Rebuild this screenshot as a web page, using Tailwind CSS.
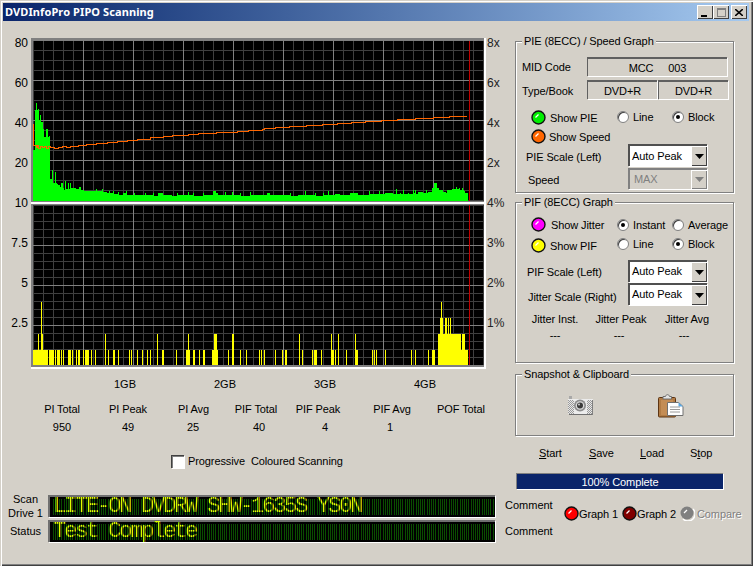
<!DOCTYPE html>
<html>
<head>
<meta charset="utf-8">
<script src="https://cdn.jsdelivr.net/npm/@tailwindcss/browser@4"></script>
<title>DVDInfoPro PIPO Scanning</title>
</head>
<body class="bg-[#d4d0c8]">
<svg width="0" height="0" class="absolute">
  <defs>
    <symbol id="led" viewBox="0 0 15 15"><circle cx="7.5" cy="7.5" r="6.5" fill="currentColor" stroke="#111" stroke-width="1.4"/><path d="M4.5 7.5 L7.5 4.5" stroke="#fff" stroke-width="1.3" fill="none"/></symbol>
    <symbol id="ledoff" viewBox="0 0 15 15"><path d="M3 13A7 7 0 0 0 13 3" stroke="#fff" stroke-width="1.4" fill="none"/><circle cx="7" cy="7" r="6.5" fill="#808080"/><path d="M4 7 L7 4" stroke="#fff" stroke-width="1.3" fill="none"/></symbol>
    <symbol id="arrow" viewBox="0 0 9 5"><path d="M0 0H9L4.5 5Z" fill="currentColor"/></symbol>
  </defs>
</svg>
<div class="w-[753px] h-[566px] overflow-hidden bg-[#d4d0c8] p-[3px] pr-[3px] font-['Liberation_Sans',Arial,sans-serif] text-[11px] leading-[16px] text-black shadow-[inset_1px_1px_0_#d4d0c8,inset_2px_2px_0_#ffffff,inset_-1px_-1px_0_#404040,inset_-2px_-2px_0_#808080]">

  <!-- title bar -->
  <div class="h-[18px] w-[746px] flex items-center justify-between bg-gradient-to-r from-[#0a246a] to-[#a6caf0] pl-[2px] pr-[2px]">
    <span class="font-['Noto_Sans',sans-serif] font-bold text-[11px] tracking-[0.1px] text-white whitespace-nowrap">DVDInfoPro PIPO Scanning</span>
    <div class="flex items-center">
      <div class="w-[16px] h-[14px] bg-[#d4d0c8] flex items-end justify-center pb-[2px] shadow-[inset_1px_1px_0_#fff,inset_-1px_-1px_0_#404040]"><div class="w-[6px] h-[2px] bg-black ml-[-2px]"></div></div>
      <div class="w-[16px] h-[14px] bg-[#d4d0c8] flex items-center justify-center shadow-[inset_1px_1px_0_#fff,inset_-1px_-1px_0_#404040]"><div class="w-[9px] h-[9px] border border-[#808080] border-t-2"></div></div>
      <div class="w-[16px] h-[14px] ml-[2px] bg-[#d4d0c8] flex items-center justify-center shadow-[inset_1px_1px_0_#fff,inset_-1px_-1px_0_#404040]"><svg width="8" height="7" viewBox="0 0 8 7"><path d="M0 0L8 7M8 0L0 7" stroke="#000" stroke-width="1.6"/></svg></div>
    </div>
  </div>

  <!-- upper area -->
  <div class="flex h-[474px]">
    <!-- left column -->
    <div class="w-[507px] shrink-0">
      <div class="flex items-start h-[348px]">
        <div class="w-[25px] mt-[2px] shrink-0 text-right text-[12px] text-black">
          <div class="h-[40px] flex items-center justify-end">80</div>
          <div class="h-[40px] flex items-center justify-end">60</div>
          <div class="h-[40px] flex items-center justify-end">40</div>
          <div class="h-[40px] flex items-center justify-end">20</div>
          <div class="h-[40px] flex items-center justify-end">10</div>
          <div class="h-[40px] flex items-center justify-end">7.5</div>
          <div class="h-[40px] flex items-center justify-end">5</div>
          <div class="h-[40px] flex items-center justify-end">2.5</div>
        </div>
        <svg class="mt-[17px] ml-[3px] shrink-0" width="455" height="331" viewBox="31 38 455 331" shape-rendering="crispEdges">
          <defs>
            <pattern id="g1" patternUnits="userSpaceOnUse" x="33" y="40" width="10" height="10"><path d="M.5 0V10M0 .5H10" stroke="#3f3f3f" fill="none"/></pattern>
            <pattern id="g2" patternUnits="userSpaceOnUse" x="33" y="205" width="10" height="8"><path d="M.5 0V8M0 .5H10" stroke="#3f3f3f" fill="none"/></pattern>
          </defs>
          <!-- frames -->
          <rect x="31" y="38" width="454" height="164" fill="#808080"/>
          <rect x="33" y="41" width="451" height="160" fill="#000"/>
          <rect x="33" y="41" width="451" height="160" fill="url(#g1)"/>
          <rect x="31" y="202" width="455" height="2" fill="#fff"/>
          <rect x="31" y="204" width="454" height="163" fill="#808080"/>
          <rect x="33" y="205" width="451" height="160" fill="#000"/>
          <rect x="33" y="205" width="451" height="160" fill="url(#g2)"/>
          <rect x="31" y="367" width="455" height="2" fill="#fff"/>
          <rect x="484" y="38" width="2" height="331" fill="#fff"/>
          <!-- major grid -->
          <path d="M83.5 41V201M133.5 41V201M183.5 41V201M233.5 41V201M283.5 41V201M333.5 41V201M383.5 41V201M433.5 41V201M33 80.5H484M33 120.5H484M33 160.5H484" stroke="#808080" fill="none"/>
          <path d="M83.5 205V365M133.5 205V365M183.5 205V365M233.5 205V365M283.5 205V365M333.5 205V365M383.5 205V365M433.5 205V365M33 245.5H484M33 285.5H484M33 325.5H484" stroke="#808080" fill="none"/>
          <path d="M469.5 41V201M469.5 205V365" stroke="#c00000" fill="none"/>
          <!-- PIE -->
          <path fill="#00ff00" d="M33 201V150H35V110H36V103H37V110H38V109H39V120H40V115H41V122H43V129H44V137H46V129H48V137H49V136H50V179H52V170H53V183H55V172H56V183H57V184H58V185H60V187H61V183H63V188H64V190H65V181H66V189H68V183H69V189H70V183H71V188H76V189H79V187H81V190H84V191H96V189H97V191H102V189H103V192H107V193H109V191H110V193H113V191H114V194H118V192H119V195H123V193H126V191H127V195H134V193H135V195H145V193H146V195H153V193H154V196H158V193H163V195H172V196H177V193H178V195H188V192H189V195H193V193H194V196H203V193H204V195H213V191H216V193H218V195H225V192H226V195H232V192H233V195H240V193H241V196H250V192H251V195H267V193H270V195H290V193H291V196H298V195H305V191H306V195H315V193H316V196H323V193H324V195H328V191H329V195H335V194H340V195H350V193H358V195H369V191H370V194H379V191H380V194H385V193H393V194H396V189H397V194H400V193H401V194H403V190H404V194H408V193H409V194H413V190H414V193H415V190H416V194H418V192H423V193H426V190H427V193H428V192H432V188H434V183H437V188H439V190H443V192H446V193H447V190H452V189H456V187H457V189H459V188H460V190H462V188H463V190H464V191H465V193H468V201Z"/>
          <!-- speed -->
          <g transform="translate(0 .5)"><path fill="none" stroke="#ff6600" d="M33 123V145H36V147H37V145H38V148H40V146H42V147H44V146H46V148H48V146H50V147H54V148H58V147H62V146H66V147H70V146H78V145H86V144H96V143H107V142H117V141H127V140H137V139H150V137H163V136H172V135H188V134H198V133H216V132H237V131H248V130H262V129H264V128H275V127H289V126H306V125H322V124H337V123H351V122H365V121H381V120H397V119H415V118H433V117H449V116H466V115"/></g>
          <!-- PIF -->
          <path fill="#ffff00" d="M33 365V350H38V334H39V350H41V302H42V334H43V350H48V365ZM49 365V350H54V365ZM55 365V350H56V365ZM57 365V350H60V365ZM61 365V350H62V365ZM63 365V350H64V365ZM68 365V350H71V365ZM72 365V350H73V365ZM76 365V350H77V365ZM78 365V350H80V365ZM83 365V350H84V365ZM85 365V350H89V365ZM91 365V350H92V365ZM95 365V350H96V365ZM105 365V334H106V365ZM108 365V350H109V365ZM113 365V350H115V365ZM118 365V350H119V365ZM129 365V350H130V365ZM131 365V350H132V365ZM137 365V350H138V365ZM142 365V350H143V365ZM147 365V350H148V365ZM150 365V350H151V365ZM157 365V334H158V365ZM162 365V350H164V365ZM176 365V350H177V365ZM186 365V350H188V334H189V350H190V365ZM193 365V350H195V365ZM199 365V350H200V365ZM203 365V350H205V365ZM212 365V350H214V334H217V350H218V365ZM228 365V350H229V365ZM232 365V334H234V365ZM240 365V350H241V365ZM246 365V350H247V365ZM259 365V350H260V365ZM261 365V350H262V365ZM264 365V350H265V365ZM275 365V350H276V365ZM282 365V350H283V365ZM285 365V350H287V365ZM299 365V334H300V365ZM302 365V350H303V365ZM312 365V350H313V365ZM314 365V350H317V365ZM321 365V350H322V365ZM331 365V334H332V350H334V365ZM335 365V350H336V365ZM338 365V334H339V365ZM346 365V350H347V365ZM355 365V334H356V350H358V365ZM372 365V350H373V365ZM374 365V350H375V365ZM376 365V350H377V365ZM385 365V350H386V365ZM411 365V350H412V365ZM415 365V350H416V365ZM428 365V350H429V365ZM432 365V350H435V365ZM438 365V334H440V318H441V302H442V318H443V334H445V318H447V334H448V318H449V334H450V318H451V334H461V350H462V334H465V350H468V365Z"/>
        </svg>
        <div class="ml-[1px] mt-[2px] shrink-0 text-[12px] text-[#222]">
          <div class="h-[40px] flex items-center">8x</div>
          <div class="h-[40px] flex items-center">6x</div>
          <div class="h-[40px] flex items-center">4x</div>
          <div class="h-[40px] flex items-center">2x</div>
          <div class="h-[40px] flex items-center">4%</div>
          <div class="h-[40px] flex items-center">3%</div>
          <div class="h-[40px] flex items-center">2%</div>
          <div class="h-[40px] flex items-center">1%</div>
        </div>
      </div>

      <div class="flex mt-[7px] ml-[72px] text-center">
        <div class="w-[100px]">1GB</div><div class="w-[100px]">2GB</div><div class="w-[100px]">3GB</div><div class="w-[100px]">4GB</div>
      </div>
      <div class="flex mt-[9px] ml-[29px] text-center whitespace-nowrap tracking-[-0.1px]">
        <div class="w-[60px]">PI Total</div><div class="w-[72px]">PI Peak</div><div class="w-[59px]">PI Avg</div><div class="w-[66px]">PIF Total</div><div class="w-[58px]">PIF Peak</div><div class="w-[90px]">PIF Avg</div><div class="w-[48px]">POF Total</div>
      </div>
      <div class="flex mt-[2px] ml-[29px] text-center">
        <div class="w-[60px]">950</div><div class="w-[72px]">49</div><div class="w-[58px]">25</div><div class="w-[74px]">40</div><div class="w-[58px]">4</div><div class="w-[72px]">1</div>
      </div>
      <div class="flex items-center mt-[18px] ml-[168px] whitespace-nowrap">
        <div class="w-[13px] h-[13px] bg-white border-t border-l border-[#404040] shadow-[inset_1px_1px_0_#808080,1px_1px_0_#fff]"></div>
        <span class="ml-[4px] tracking-[-0.1px]">Progressive&nbsp; Coloured Scanning</span>
      </div>
    </div>

    <!-- right column -->
    <div class="w-[236px] shrink-0 tracking-[-0.1px]">
      <!-- PIE group -->
      <div class="relative mt-[20px] ml-[5px] w-[219px] h-[152px] border border-[#808080] shadow-[inset_1px_1px_0_#fff,1px_1px_0_#fff]">
        <span class="absolute -top-[9px] left-[6px] px-[2px] bg-[#d4d0c8] whitespace-nowrap">PIE (8ECC) / Speed Graph</span>
        <div class="flex items-start h-[19px] mt-[15px] ml-[6px]">
          <span class="w-[65px] mt-[2px]">MID Code</span>
          <div class="w-[140px] h-[19px] flex items-center justify-center border-t-2 border-l border-[#606060] shadow-[1px_1px_0_#fff] whitespace-pre">MCC     003</div>
        </div>
        <div class="flex items-start h-[19px] mt-[4px] ml-[6px]">
          <span class="w-[65px] mt-[3px]">Type/Book</span>
          <div class="w-[70px] h-[19px] flex items-center justify-center border-t-2 border-l border-[#606060] shadow-[1px_1px_0_#fff]">DVD+R</div>
          <div class="w-[70px] h-[19px] ml-[1px] flex items-center justify-center border-t-2 border-l border-[#606060] shadow-[1px_1px_0_#fff]">DVD+R</div>
        </div>
        <div class="flex items-center h-[19px] mt-[9px] ml-[15px]">
          <svg width="15" height="15" class="text-[#00ee00] shrink-0"><use href="#led"/></svg>
          <span class="ml-[4px] w-[67px]">Show PIE</span>
          <div class="w-[12px] h-[12px] mb-[2px] rounded-full bg-white border border-[#808080] shadow-[inset_1px_1px_0_#404040]"></div>
          <span class="ml-[4px] w-[39px] mb-[2px]">Line</span>
          <div class="w-[12px] h-[12px] mb-[2px] rounded-full bg-white border border-[#808080] shadow-[inset_1px_1px_0_#404040] flex items-center justify-center"><div class="w-[4px] h-[4px] rounded-full bg-black"></div></div>
          <span class="ml-[4px] mb-[2px]">Block</span>
        </div>
        <div class="flex items-center h-[19px] ml-[15px]">
          <svg width="15" height="15" class="text-[#ff6600] shrink-0"><use href="#led"/></svg>
          <span class="ml-[3px]">Show Speed</span>
        </div>
        <div class="flex items-start h-[22px] mt-[-2px] ml-[10px]">
          <span class="w-[102px] mt-[5px]">PIE Scale (Left)</span>
          <div class="w-[79px] h-[22px] flex items-stretch bg-white border-t-2 border-l-2 border-[#505050] shadow-[1px_1px_0_#fff]">
            <span class="flex-1 pl-[2px] leading-[20px]">Auto Peak</span>
            <div class="w-[16px] bg-[#d4d0c8] flex items-center justify-center shadow-[inset_1px_1px_0_#fff,inset_-1px_-1px_0_#404040]"><svg width="9" height="5" class="text-black"><use href="#arrow"/></svg></div>
          </div>
        </div>
        <div class="flex items-start h-[22px] mt-[2px] ml-[12px]">
          <span class="w-[100px] mt-[4px]">Speed</span>
          <div class="w-[79px] h-[21px] flex items-stretch bg-[#d4d0c8] border-t-2 border-l-2 border-[#808080] shadow-[1px_1px_0_#fff]">
            <span class="flex-1 pl-[4px] leading-[19px] text-[#808080]">MAX</span>
            <div class="w-[16px] bg-[#d4d0c8] flex items-center justify-center shadow-[inset_1px_1px_0_#fff,inset_-1px_-1px_0_#808080]"><svg width="9" height="5" class="text-[#808080]"><use href="#arrow"/></svg></div>
          </div>
        </div>
      </div>

      <!-- PIF group -->
      <div class="relative mt-[9px] ml-[5px] w-[219px] h-[161px] border border-[#808080] shadow-[inset_1px_1px_0_#fff,1px_1px_0_#fff]">
        <span class="absolute -top-[9px] left-[6px] px-[2px] bg-[#d4d0c8] whitespace-nowrap">PIF (8ECC) Graph</span>
        <div class="flex items-center h-[19px] mt-[12px] ml-[15px]">
          <svg width="15" height="15" class="text-[#ff00ff] shrink-0"><use href="#led"/></svg>
          <span class="ml-[5px] w-[66px]">Show Jitter</span>
          <div class="w-[12px] h-[12px] rounded-full bg-white border border-[#808080] shadow-[inset_1px_1px_0_#404040] flex items-center justify-center"><div class="w-[4px] h-[4px] rounded-full bg-black"></div></div>
          <span class="ml-[4px] w-[39px]">Instant</span>
          <div class="w-[12px] h-[12px] rounded-full bg-white border border-[#808080] shadow-[inset_1px_1px_0_#404040]"></div>
          <span class="ml-[4px]">Average</span>
        </div>
        <div class="flex items-center h-[19px] mt-[2px] ml-[15px]">
          <svg width="15" height="15" class="text-[#ffff00] shrink-0"><use href="#led"/></svg>
          <span class="ml-[4px] w-[67px]">Show PIF</span>
          <div class="w-[12px] h-[12px] mb-[4px] rounded-full bg-white border border-[#808080] shadow-[inset_1px_1px_0_#404040]"></div>
          <span class="ml-[4px] w-[39px] mb-[4px]">Line</span>
          <div class="w-[12px] h-[12px] mb-[4px] rounded-full bg-white border border-[#808080] shadow-[inset_1px_1px_0_#404040] flex items-center justify-center"><div class="w-[4px] h-[4px] rounded-full bg-black"></div></div>
          <span class="ml-[4px] mb-[4px]">Block</span>
        </div>
        <div class="flex items-start h-[22px] mt-[5px] ml-[11px]">
          <span class="w-[101px] mt-[4px]">PIF Scale (Left)</span>
          <div class="w-[79px] h-[22px] flex items-stretch bg-white border-t-2 border-l-2 border-[#505050] shadow-[1px_1px_0_#fff]">
            <span class="flex-1 pl-[2px] leading-[19px]">Auto Peak</span>
            <div class="w-[16px] bg-[#d4d0c8] flex items-center justify-center shadow-[inset_1px_1px_0_#fff,inset_-1px_-1px_0_#404040]"><svg width="9" height="5" class="text-black"><use href="#arrow"/></svg></div>
          </div>
        </div>
        <div class="flex items-start h-[22px] mt-[1px] ml-[12px]">
          <span class="w-[100px] mt-[6px]">Jitter Scale (Right)</span>
          <div class="w-[79px] h-[22px] flex items-stretch bg-white border-t-2 border-l-2 border-[#505050] shadow-[1px_1px_0_#fff]">
            <span class="flex-1 pl-[2px] leading-[19px]">Auto Peak</span>
            <div class="w-[16px] bg-[#d4d0c8] flex items-center justify-center shadow-[inset_1px_1px_0_#fff,inset_-1px_-1px_0_#404040]"><svg width="9" height="5" class="text-black"><use href="#arrow"/></svg></div>
          </div>
        </div>
        <div class="flex mt-[6px] ml-[6px] text-center whitespace-nowrap">
          <div class="w-[66px]">Jitter Inst.</div><div class="w-[66px]">Jitter Peak</div><div class="w-[66px]">Jitter Avg</div>
        </div>
        <div class="flex ml-[6px] text-center">
          <div class="w-[66px]">---</div><div class="w-[62px]">---</div><div class="w-[68px]">---</div>
        </div>
      </div>

      <!-- snapshot group -->
      <div class="relative mt-[11px] ml-[5px] w-[219px] h-[62px] border border-[#808080] shadow-[inset_1px_1px_0_#fff,1px_1px_0_#fff]">
        <span class="absolute -top-[9px] left-[6px] px-[2px] bg-[#d4d0c8] whitespace-nowrap">Snapshot &amp; Clipboard</span>
        <div class="flex items-start mt-[18px] ml-[52px]">
          <svg class="mt-[3px]" width="26" height="20" viewBox="0 0 26 20" shape-rendering="crispEdges">
            <defs><pattern id="dit" patternUnits="userSpaceOnUse" width="2" height="2"><rect width="2" height="2" fill="#e8e8e8"/><rect width="1" height="1" fill="#9a9a9a"/><rect x="1" y="1" width="1" height="1" fill="#9a9a9a"/></pattern></defs>
            <rect x="1" y="0" width="3" height="3" fill="#a8a8a8"/>
            <rect x="0" y="3" width="25" height="15" fill="#ececec"/>
            <rect x="0" y="4" width="6" height="14" fill="url(#dit)"/>
            <rect x="19" y="4" width="5" height="14" fill="url(#dit)"/>
            <rect x="1" y="18" width="24" height="1" fill="#707070"/>
            <rect x="24" y="4" width="1" height="15" fill="#808080"/>
            <g shape-rendering="auto"><circle cx="12" cy="9.5" r="6" fill="#8c8c8c"/><circle cx="12" cy="9.5" r="4.3" fill="#d8d8d8"/><circle cx="12" cy="9.5" r="3" fill="#3a3a3a"/><circle cx="11" cy="8.5" r="1" fill="#cfcfcf"/></g>
          </svg>
          <svg class="ml-[64px]" width="26" height="25" viewBox="0 0 26 25">
            <rect x="0.5" y="4.5" width="17" height="19.5" rx="1" fill="#b27c45" stroke="#5c3413"/>
            <rect x="3" y="7" width="12" height="15" fill="#c48d55"/>
            <path d="M5 6V3.5H7.5C8 1 11 1 11.5 3.5H13.5V6Z" fill="#e4e4e4" stroke="#707070"/>
            <path d="M9.5 9.5H20.5L25 13.5V22.5H9.5Z" fill="#fff" stroke="#707070"/>
            <path d="M20.5 9.5L25 13.5H20.5Z" fill="#5aa9e6"/>
            <path d="M12 14H22M12 16.5H22M12 19H22" stroke="#9a9a9a"/>
          </svg>
        </div>
      </div>

      <div class="flex mt-[9px] ml-[29px]">
        <div class="w-[50px]"><u>S</u>tart</div><div class="w-[51px]"><u>S</u>ave</div><div class="w-[50px]"><u>L</u>oad</div><div class="w-[50px]">S<u>t</u>op</div>
      </div>
      <div class="mt-[12px] ml-[6px] w-[207px] h-[16px] bg-[#0a246a] border-t border-l border-[#808080] shadow-[1px_1px_0_#fff] flex items-center justify-center text-white">100% Complete</div>
    </div>
  </div>

  <!-- bottom area -->
  <div class="flex">
    <div class="w-[561px] shrink-0">
      <div class="flex items-center h-[22px]">
        <div class="w-[45px] text-center leading-[14px]">Scan<br>Drive 1</div>
        <div class="relative w-[447px] h-[22px] bg-[#000] border-t-2 border-l-2 border-[#707070] shadow-[1px_1px_0_#fff] pl-[3px]">
          <div class="absolute inset-0 my-[2px] ml-[3px] bg-[repeating-linear-gradient(90deg,#0a4d00_0,#0a4d00_1px,#000_1px,#000_2px,#0a4d00_2px,#0a4d00_3px,#000_3px,#000_4px,#0a4d00_4px,#0a4d00_5px,#000_5px,#000_6px,#0a4d00_6px,#0a4d00_7px,#000_7px,#000_8px,#0a4d00_8px,#0a4d00_9px,#000_9px,#000_11px)]"></div>
          <div class="relative font-['Liberation_Mono',monospace] text-[22px] leading-[20px] tracking-[-2.2px] text-[#e0ff00] whitespace-pre">LITE-ON DVDRW SHW-1635S YS0N</div>
          <div class="absolute inset-0 ml-[3px] opacity-60 bg-[repeating-linear-gradient(90deg,transparent_0,transparent_1px,#000_1px,#000_2px,transparent_2px,transparent_3px,#000_3px,#000_4px,transparent_4px,transparent_5px,#000_5px,#000_6px,transparent_6px,transparent_7px,#000_7px,#000_8px,transparent_8px,transparent_9px,#000_9px,#000_11px)]"></div>
        </div>
        <span class="ml-[10px] mb-[3px]">Comment</span>
      </div>
      <div class="flex items-center h-[22px] mt-[3px]">
        <div class="w-[45px] text-center">Status</div>
        <div class="relative w-[447px] h-[22px] bg-[#000] border-t-2 border-l-2 border-[#707070] shadow-[1px_1px_0_#fff] pl-[3px]">
          <div class="absolute inset-0 my-[2px] ml-[3px] bg-[repeating-linear-gradient(90deg,#0a4d00_0,#0a4d00_1px,#000_1px,#000_2px,#0a4d00_2px,#0a4d00_3px,#000_3px,#000_4px,#0a4d00_4px,#0a4d00_5px,#000_5px,#000_6px,#0a4d00_6px,#0a4d00_7px,#000_7px,#000_8px,#0a4d00_8px,#0a4d00_9px,#000_9px,#000_11px)]"></div>
          <div class="relative font-['Liberation_Mono',monospace] text-[22px] leading-[20px] tracking-[-2.2px] text-[#e0ff00] whitespace-pre">Test Complete</div>
          <div class="absolute inset-0 ml-[3px] opacity-60 bg-[repeating-linear-gradient(90deg,transparent_0,transparent_1px,#000_1px,#000_2px,transparent_2px,transparent_3px,#000_3px,#000_4px,transparent_4px,transparent_5px,#000_5px,#000_6px,transparent_6px,transparent_7px,#000_7px,#000_8px,transparent_8px,transparent_9px,#000_9px,#000_11px)]"></div>
        </div>
        <span class="ml-[10px]">Comment</span>
      </div>
    </div>
    <div class="flex items-center h-[15px] mt-[11px] whitespace-nowrap tracking-[-0.1px]">
      <svg width="15" height="15" class="text-[#ff0000] shrink-0"><use href="#led"/></svg>
      <span class="w-[43px]">Graph 1</span>
      <svg width="15" height="15" class="text-[#800000] shrink-0"><use href="#led"/></svg>
      <span class="w-[43px]">Graph 2</span>
      <svg width="15" height="15" class="shrink-0"><use href="#ledoff"/></svg>
      <span class="ml-[2px] text-[#808080] [text-shadow:1px_1px_0_#fff]">Compare</span>
    </div>
  </div>
</div>
</body>
</html>
